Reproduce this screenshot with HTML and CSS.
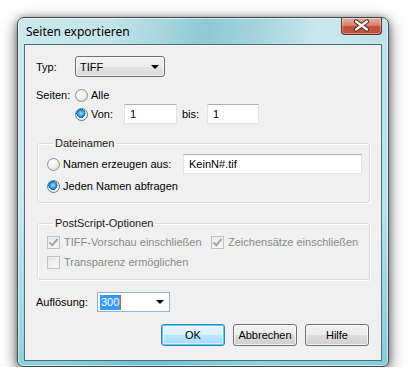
FILE: index.html
```html
<!DOCTYPE html>
<html lang="de">
<head>
    <meta charset="UTF-8">
    <meta name="viewport" content="width=device-width, initial-scale=1.0">
    <title>Seiten exportieren</title>
    <link rel="stylesheet" href="styles.css">
</head>
<body>
    <div class="window">
        <div class="titlebar">
            <span class="title">Seiten exportieren</span>
            <div class="close">
                <svg width="41" height="17" viewBox="0 0 41 17">
                    <path d="M15 4.5 L26 12.5 M26 4.5 L15 12.5" stroke="#4a2a25" stroke-width="4.2" stroke-linecap="round"/>
                    <path d="M15 4.5 L26 12.5 M26 4.5 L15 12.5" stroke="#ffffff" stroke-width="2.2" stroke-linecap="round"/>
                </svg>
            </div>
        </div>

        <div class="client">
            <!-- Typ -->
            <div class="row row-typ">
                <span class="label lbl-typ">Typ:</span>
                <div class="dropdown">
                    <span>TIFF</span>
                    <span class="arrow"></span>
                </div>
            </div>

            <!-- Seiten -->
            <div class="row row-alle">
                <span class="label lbl-typ">Seiten:</span>
                <span class="radio"></span>
                <span>Alle</span>
            </div>
            <div class="row row-von">
                <span class="label lbl-typ"></span>
                <span class="radio checked"></span>
                <span class="lbl-von">Von:</span>
                <div class="field field-von">1</div>
                <span class="lbl-bis">bis:</span>
                <div class="field field-bis">1</div>
            </div>

            <!-- Dateinamen -->
            <div class="group group-names">
                <div class="legend">Dateinamen</div>
                <div class="row row-gen">
                    <span class="radio"></span>
                    <span class="lbl-gen">Namen erzeugen aus:</span>
                    <div class="field field-name">KeinN#.tif</div>
                </div>
                <div class="row row-ask">
                    <span class="radio checked"></span>
                    <span>Jeden Namen abfragen</span>
                </div>
            </div>

            <!-- PostScript -->
            <div class="group group-ps">
                <div class="legend">PostScript-Optionen</div>
                <div class="row row-check">
                    <span class="check on"></span>
                    <span class="lbl-tiff">TIFF-Vorschau einschließen</span>
                    <span class="check on"></span>
                    <span>Zeichensätze einschließen</span>
                </div>
                <div class="row row-check row-check2">
                    <span class="check"></span>
                    <span>Transparenz ermöglichen</span>
                </div>
            </div>

            <!-- Auflösung -->
            <div class="row row-res">
                <span class="label lbl-res">Auflösung:</span>
                <div class="combo">
                    <span class="sel">300</span><span class="caret"></span>
                    <span class="arrow"></span>
                </div>
            </div>

            <div class="buttons">
                <div class="btn default">OK</div>
                <div class="btn">Abbrechen</div>
                <div class="btn">Hilfe</div>
            </div>
        </div>
    </div>
</body>
</html>
```

FILE: styles.css
```css
html, body {
    margin: 0;
    background: #ffffff;
}

body {
    padding: 17px 0 0 17px;
    font-family: "Liberation Sans", Arial, sans-serif;
    font-size: 11px;
    color: #000;
}

/* Aero frame */
.window {
    box-sizing: border-box;
    width: 372px;
    height: 350px;
    padding: 0 6px 5px 6px;
    border: 1px solid #3d4a50;
    border-radius: 7px 7px 6px 6px;
    background:
        linear-gradient(180deg, rgba(255,255,255,0) 0%, rgba(255,255,255,0) 55%, rgba(70,185,205,0.45) 100%),
        linear-gradient(100deg, #cbe8ee 0%, #c2e4ea 22%, #8fc9d4 44%, #a4d4dd 56%, #c9e8ee 70%, #b4dee6 100%);
    box-shadow: inset 0 0 0 1px rgba(255,255,255,0.55), 0 5px 16px rgba(0,0,0,0.6), 0 0 6px rgba(0,0,0,0.3);
}

.titlebar {
    height: 26px;
    display: flex;
    align-items: flex-start;
}

.title {
    font-family: "Noto Sans", "Open Sans", sans-serif;
    font-size: 12px;
    line-height: 16px;
    margin: 6px 0 0 2px;
    color: #000;
}

.close {
    margin-left: auto;
    width: 41px;
    height: 17px;
    border: 1px solid #6b2a22;
    border-top: none;
    border-radius: 0 0 4px 4px;
    box-sizing: border-box;
    background: linear-gradient(180deg, #e9b0a4 0%, #d7826f 45%, #c24c35 55%, #c5563c 100%);
    box-shadow: inset 0 0 0 1px rgba(255,255,255,0.35);
}

.close svg {
    display: block;
    margin: -1px 0 0 -1px;
}

/* Client area */
.client {
    box-sizing: border-box;
    height: 317px;
    padding: 11px 11px 0 11px;
    background: #f0f0f0;
    border: 1px solid #4f6f7a;
}

.row {
    display: flex;
    align-items: center;
}

.label {
    flex: none;
}

.lbl-typ {
    width: 39px;
}

.row-typ {
    height: 21px;
}

.dropdown {
    box-sizing: border-box;
    width: 90px;
    height: 21px;
    display: flex;
    align-items: center;
    padding-left: 4px;
    border: 1px solid #707070;
    border-radius: 3px;
    background: linear-gradient(180deg, #f3f3f3 0%, #ececec 50%, #e2e2e2 51%, #d9d9d9 100%);
    box-shadow: inset 0 0 0 1px rgba(255,255,255,0.6);
}

.arrow {
    margin-left: auto;
    margin-right: 5px;
    width: 0;
    height: 0;
    border-left: 4px solid transparent;
    border-right: 4px solid transparent;
    border-top: 4px solid #000;
}

.row-alle {
    height: 16px;
    margin-top: 10px;
}

.radio {
    flex: none;
    box-sizing: border-box;
    width: 13px;
    height: 13px;
    margin-right: 3px;
    border-radius: 50%;
    border: 1px solid #8e8f8f;
    background: radial-gradient(circle at 40% 35%, #ffffff 0%, #f2f2f2 40%, #d4d4d4 100%);
}

.radio.checked {
    border-color: #4f7da3;
    background:
        radial-gradient(circle at 45% 40%, #9ee0fb 0%, #3ea7e3 28%, #1b5d93 50%, rgba(0,0,0,0) 52%),
        radial-gradient(circle, #ffffff 0%, #e6e6e6 100%);
}

.row-von {
    height: 20px;
    margin-top: 1px;
}

.lbl-von {
    width: 33px;
}

.field {
    box-sizing: border-box;
    height: 20px;
    display: flex;
    align-items: center;
    padding-left: 5px;
    background: #fff;
    border: 1px solid #dfe3e8;
    border-top-color: #abadb3;
}

.field-von {
    width: 53px;
}

.lbl-bis {
    margin-left: 5px;
    width: 25px;
}

.field-bis {
    width: 52px;
}

/* Group boxes */
.group {
    margin-left: 1px;
    width: 333px;
    box-sizing: border-box;
    border: 1px solid #d5dfe5;
    border-radius: 3px;
    padding: 0 0 8px 9px;
    box-shadow: inset 1px 1px 0 #fff, 1px 1px 0 #fff;
}

.legend {
    width: max-content;
    margin: -8px 0 0 6px;
    padding: 0 2px;
    line-height: 14px;
    background: #f0f0f0;
    color: #1a1a1a;
}

.group-names {
    margin-top: 19px;
}

.row-gen {
    height: 20px;
    margin-top: 4px;
}

.lbl-gen {
    width: 120px;
}

.field-name {
    width: 179px;
}

.row-ask {
    height: 16px;
    margin-top: 4px;
}

.group-ps {
    margin-top: 20px;
    padding-bottom: 9px;
    color: #8a8a8a;
}

.row-check {
    height: 16px;
    margin-top: 4px;
}

.check {
    flex: none;
    position: relative;
    box-sizing: border-box;
    width: 13px;
    height: 13px;
    margin-right: 4px;
    border: 1px solid #c2c2c2;
    background: linear-gradient(135deg, #e9e9e9 0%, #f7f7f7 100%);
}

.check.on::after {
    content: "";
    position: absolute;
    left: 3px;
    top: 0px;
    width: 3px;
    height: 7px;
    border-right: 2px solid #a8a8a8;
    border-bottom: 2px solid #a8a8a8;
    transform: rotate(40deg);
}

.lbl-tiff {
    width: 147px;
}

/* Resolution + buttons */
.row-res {
    height: 20px;
    margin-top: 12px;
}

.lbl-res {
    width: 61px;
}

.combo {
    box-sizing: border-box;
    width: 73px;
    height: 20px;
    display: flex;
    align-items: center;
    padding-left: 2px;
    background: #fff;
    border: 1px solid #8fb4da;
}

.sel {
    background: #3399ff;
    color: #fff;
    line-height: 15px;
    padding: 0 1px;
}

.caret {
    width: 1px;
    height: 15px;
    background: #c36b1f;
}

.buttons {
    display: flex;
    justify-content: flex-end;
    gap: 8px;
    margin: 12px 1px 0 0;
}

.btn {
    box-sizing: border-box;
    width: 64px;
    height: 22px;
    display: flex;
    align-items: center;
    justify-content: center;
    border: 1px solid #707070;
    border-radius: 3px;
    background: linear-gradient(180deg, #f2f2f2 0%, #ebebeb 50%, #dddddd 51%, #cfcfcf 100%);
    box-shadow: inset 0 0 0 1px rgba(255,255,255,0.7);
}

.btn.default {
    border-color: #3c7fb1;
    background: linear-gradient(180deg, #eaf6fd 0%, #d9f0fc 50%, #bee6fd 51%, #a7d9f5 100%);
    box-shadow: inset 0 0 0 1px #48d1fa, inset 0 0 0 2px rgba(255,255,255,0.5);
}
```
